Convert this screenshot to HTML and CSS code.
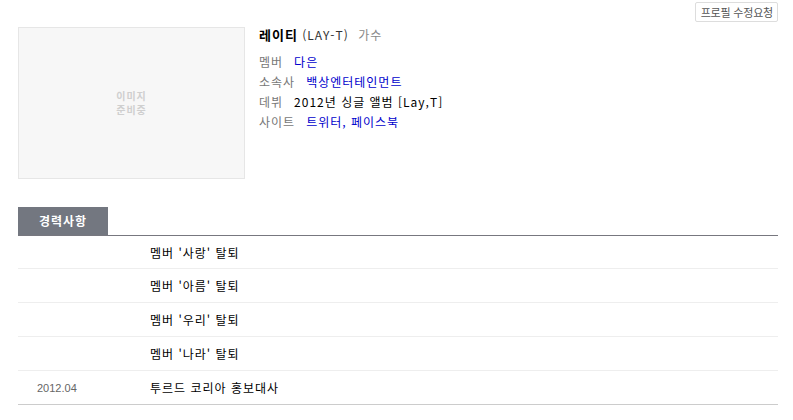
FILE: index.html
```html
<!DOCTYPE html>
<html lang="ko">
<head>
<meta charset="utf-8">
<link rel="stylesheet" href="styles.css">
</head>
<body>
<div class="page">
  <div class="topbar">
    <span class="edit-btn">프로필 수정요청</span>
  </div>
  <div class="profile">
    <div class="photo"><span>이미지<br>준비중</span></div>
    <div class="info">
      <div class="title"><strong>레이티</strong> <span class="eng">(LAY-T)</span> <span class="job">가수</span></div>
      <dl class="rows">
        <div class="row"><dt>멤버</dt><dd><a>다은</a></dd></div>
        <div class="row"><dt>소속사</dt><dd><a>백상엔터테인먼트</a></dd></div>
        <div class="row"><dt>데뷔</dt><dd>2012년 싱글 앨범 [Lay,T]</dd></div>
        <div class="row"><dt>사이트</dt><dd><a>트위터</a><a>, </a><a>페이스북</a></dd></div>
      </dl>
    </div>
  </div>
  <div class="tabs"><span class="tab">경력사항</span></div>
  <ul class="career">
    <li><span class="date"></span><span class="desc">멤버 '사랑' 탈퇴</span></li>
    <li><span class="date"></span><span class="desc">멤버 '아름' 탈퇴</span></li>
    <li><span class="date"></span><span class="desc">멤버 '우리' 탈퇴</span></li>
    <li><span class="date"></span><span class="desc">멤버 '나라' 탈퇴</span></li>
    <li class="last"><span class="date">2012.04</span><span class="desc">투르드 코리아 홍보대사</span></li>
  </ul>
</div>
</body>
</html>
```

FILE: styles.css
```css
* { box-sizing: border-box; }
html, body { margin: 0; padding: 0; background: #fff; }
body {
  font-family: "Noto Sans CJK KR", "Noto Sans", sans-serif;
  font-size: 12px;
  letter-spacing: 1px;
  color: #000;
}
.page {
  width: 760px;
  margin-left: 18px;
}
.topbar {
  display: flex;
  justify-content: flex-end;
  height: 22px;
  padding-top: 2px;
}
.edit-btn {
  display: inline-flex;
  align-items: center;
  height: 20px;
  padding: 0 4px 0 5px;
  border: 1px solid #ddd;
  border-radius: 2px;
  color: #555;
  font-size: 11px;
  letter-spacing: -0.2px;
  line-height: 18px;
}
.profile {
  display: flex;
  margin-top: 5px;
}
.photo {
  width: 227px;
  height: 152px;
  border: 1px solid #e6e6e6;
  background: #f7f7f7;
  display: flex;
  align-items: center;
  justify-content: center;
  text-align: center;
  color: #cfcfcf;
  font-size: 10px;
  font-weight: bold;
  line-height: 14px;
}
.info {
  margin-left: 14px;
}
.title {
  height: 20px;
  line-height: 15px;
  font-size: 12px;
  color: #333;
  margin-bottom: 5px;
}
.title strong {
  font-size: 13px;
  color: #000;
}
.title .job {
  color: #888;
  margin-left: 5px;
}
.rows {
  margin: 0;
}
.row {
  display: flex;
  height: 20px;
  line-height: 20px;
}
.row dt {
  color: #777;
  margin-right: 11px;
}
.row dd {
  margin: 0;
  color: #000;
}
.row a {
  color: #0000cc;
  text-decoration: none;
}
.tabs {
  margin-top: 28px;
  border-bottom: 1px solid #77777f;
  display: flex;
}
.tab {
  width: 90px;
  height: 28px;
  line-height: 28px;
  background: #737780;
  color: #fff;
  font-weight: bold;
  font-size: 12px;
  text-align: center;
}
.career {
  list-style: none;
  margin: 0;
  padding: 0;
}
.career li {
  display: flex;
  align-items: center;
  height: 34px;
  border-bottom: 1px solid #eeeeee;
}
.career li:first-child {
  height: 33px;
}
.career li.last {
  border-bottom-color: #cccccc;
}
.date {
  width: 132px;
  padding-left: 19px;
  font-family: "Liberation Sans", Arial, sans-serif;
  font-size: 11px;
  letter-spacing: 0;
  color: #666;
}
.desc {
  color: #000;
}
```
